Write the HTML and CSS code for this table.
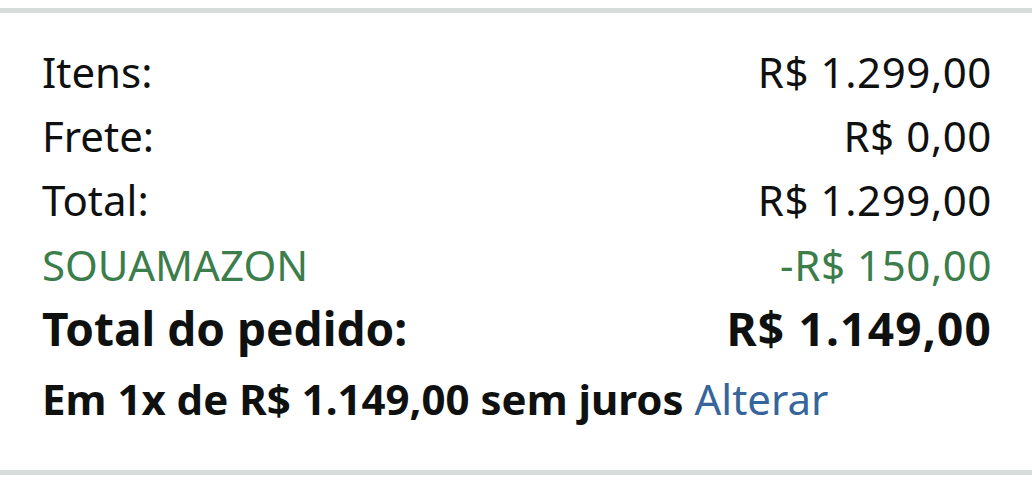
FILE: index.html
```html
<!DOCTYPE html>
<html lang="pt-BR">
<head>
<meta charset="utf-8">
<link rel="stylesheet" href="styles.css">
</head>
<body>
<section class="summary">
  <div class="row"><span>Itens:</span><span class="amt">R$ 1.299,00</span></div>
  <div class="row"><span>Frete:</span><span class="amt">R$ 0,00</span></div>
  <div class="row"><span>Total:</span><span class="amt">R$ 1.299,00</span></div>
  <div class="row promo"><span>SOUAMAZON</span><span class="amt">-R$ 150,00</span></div>
  <div class="row grand"><span>Total do pedido:</span><span class="amt-bold">R$ 1.149,00</span></div>
  <p class="install"><b>Em 1x de R$ 1.149,00 sem juros</b> <a class="link">Alterar</a></p>
</section>
</body>
</html>
```

FILE: styles.css
```css
html, body {
  margin: 0;
  background: #ffffff;
}
body {
  padding-top: 8px;
  font-family: "Noto Sans", "Open Sans", sans-serif;
  color: #0f1111;
}
.summary {
  border-top: 5px solid #d8dcdb;
  border-bottom: 5px solid #d8dcdb;
  padding: 27px 40px 31px 42px;
}
.row {
  display: flex;
  justify-content: space-between;
  font-size: 42px;
  line-height: 64px;
}
.amt {
  letter-spacing: 0.6px;
}
.promo {
  color: #3b7d4b;
  line-height: 66px;
}
.grand {
  font-size: 46px;
  font-weight: 700;
  line-height: 60px;
}
.amt-bold {
  letter-spacing: 1.2px;
}
.install {
  margin: 0;
  font-size: 42px;
  line-height: 81px;
}
.install b {
  font-weight: 700;
}
.link {
  color: #36659b;
}
```
